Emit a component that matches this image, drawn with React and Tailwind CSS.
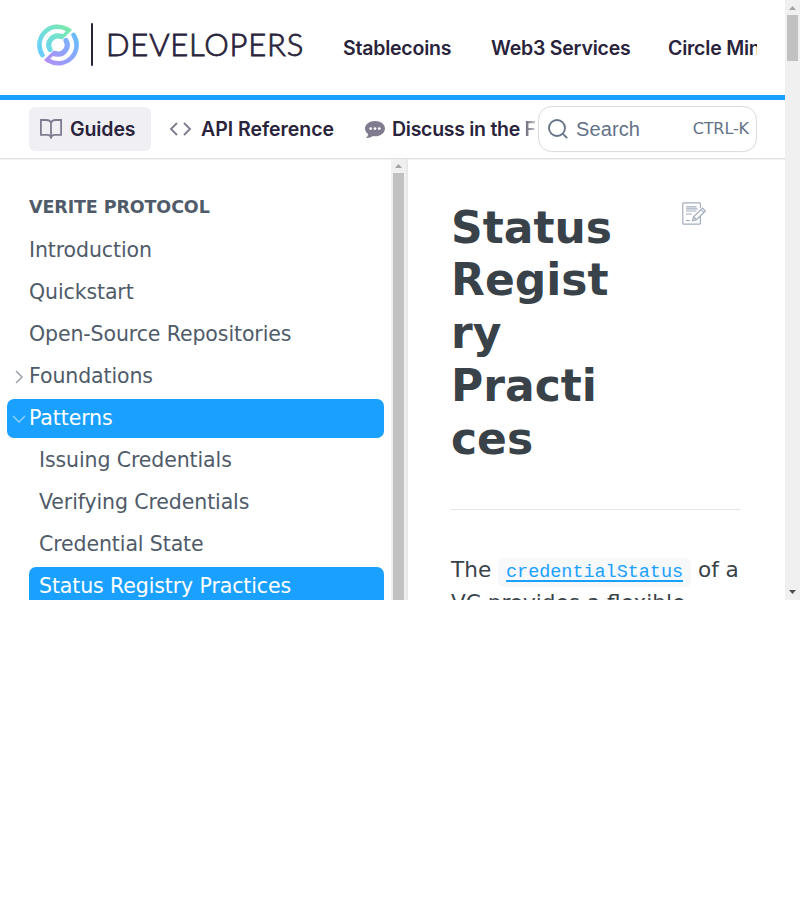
const links = [
  { label: 'Introduction' },
  { label: 'Quickstart' },
  { label: 'Open-Source Repositories' },
  { label: 'Foundations', chevron: 'right' },
  { label: 'Patterns', chevron: 'down', active: true },
];

const children = [
  { label: 'Issuing Credentials' },
  { label: 'Verifying Credentials' },
  { label: 'Credential State' },
  { label: 'Status Registry Practices', active: true },
];

function LogoHalf({ paint, transform }) {
  return (
    <g transform={transform} stroke={paint} fill="none" strokeLinecap="round">
      <path strokeWidth="4.600" d="M5.400 31A18.300 18.300 0 0 1 30.300 5.400" />
      <path strokeWidth="5.200" d="M13 25.500A9.100 9.100 0 0 1 23.500 12.300" />
      <path fill={paint} strokeWidth="1.500" strokeLinejoin="round" d="M30.500 3.800 34 6 25 14.600 22.500 14 23.500 10.500 26.500 10.700 29.500 7.500Z" />
    </g>
  );
}

function Logo() {
  return (
    <svg className="-mt-1.5 h-[42px] w-[42px] shrink-0" viewBox="0 0 42 42" fill="none">
      <defs>
        <linearGradient id="mint" x1="34" y1="5" x2="3" y2="32" gradientUnits="userSpaceOnUse">
          <stop stopColor="#79e9a9" />
          <stop offset="0.5" stopColor="#72dfd6" />
          <stop offset="1" stopColor="#68ccff" />
        </linearGradient>
        <linearGradient id="violet" x1="34" y1="4" x2="2" y2="32" gradientUnits="userSpaceOnUse">
          <stop stopColor="#b18ff5" />
          <stop offset="0.5" stopColor="#8fa2fc" />
          <stop offset="1" stopColor="#65bfff" />
        </linearGradient>
      </defs>
      <LogoHalf paint="url(#mint)" />
      <LogoHalf paint="url(#violet)" transform="rotate(180 21 21)" />
    </svg>
  );
}

function Header() {
  return (
    <header className="flex h-[100px] items-center border-b-[5px] border-[#1aa1ff] pr-7 pl-[36.500px]">
      <Logo />
      <div className="-mt-1.5 ml-[12px] h-[43px] w-[2px] shrink-0 rounded bg-[#29233b]" />
      <div className="-mt-[7px] ml-[13.500px] w-[198px] shrink-0 font-['Lato'] text-[31px] leading-none font-light tracking-[0.8px] whitespace-nowrap text-[#29233b] [-webkit-text-stroke:0.8px_#29233b]">
        DEVELOPERS
      </div>
      <nav className="ml-[39px] flex min-w-0 flex-1 overflow-hidden font-['Inter'] text-[19.500px] leading-7 font-semibold tracking-[-0.220px] whitespace-nowrap text-[#29233b]">
        <a className="w-[148px] shrink-0">Stablecoins</a>
        <a className="w-[177px] shrink-0">Web3 Services</a>
        <a className="shrink-0">Circle Mint</a>
      </nav>
    </header>
  );
}

function SubNav() {
  return (
    <div className="flex h-[59px] items-center border-b border-[#e0e0e0] pr-7 pl-[29px] shadow-[0_1px_1px_rgba(0,0,0,0.05)]">
      <nav className="flex min-w-0 flex-1 items-center overflow-hidden font-['Inter'] text-[19.500px] font-semibold whitespace-nowrap text-[#29233b]">
        <a className="flex h-11 w-[122px] shrink-0 items-center rounded-md bg-[#f0eff4] pl-[11px]">
          <svg className="mr-2 h-5 w-[22px]" viewBox="0 0 22 20" fill="none" stroke="#817b90" strokeWidth="1.800">
            <path d="M11 3.500C10 1.600 8.500 1 6.500 1H.9v14.800h6.400c2 0 3.200.8 3.700 2.700.5-1.900 1.700-2.700 3.700-2.700h6.400V1h-5.600c-2 0-3.500.6-4.500 2.500Zm0 0V19" />
          </svg>
          <span className="pt-0.5 tracking-[-0.100px]">Guides</span>
        </a>
        <a className="ml-[18px] flex w-[196px] shrink-0 items-center">
          <svg className="mr-[9px] h-4 w-[23px]" viewBox="0 0 23 16" fill="none" stroke="#817b90" strokeWidth="1.900">
            <path d="M8 2 2 8l6 6M15 2l6 6-6 6" />
          </svg>
          <span className="pt-0.5 tracking-[-0.020px]">API Reference</span>
        </a>
        <a className="flex shrink-0 items-center">
          <svg className="mt-0.5 mr-[7px] h-[18px] w-5" viewBox="0 0 20 18">
            <path fill="#817b90" d="M10 0C4.500 0 0 3.200 0 7.500c0 2.300 1.200 4.200 3.200 5.500-.2 1.500-1 2.900-2.200 4 2.500.4 5-.4 6.800-1.900.7.100 1.400.2 2.200.2 5.500 0 10-3.400 10-7.800S15.500 0 10 0Z" />
            <circle cx="5.700" cy="7.600" r="1.400" fill="#fff" />
            <circle cx="10" cy="7.600" r="1.400" fill="#fff" />
            <circle cx="14.300" cy="7.600" r="1.400" fill="#fff" />
          </svg>
          <span className="pt-0.5 tracking-[-0.280px]">
            Discuss in the{' '}
            <span className="bg-gradient-to-r from-[#6b667a] to-[#d0ced5] bg-clip-text text-transparent">F</span>
          </span>
        </a>
      </nav>
      <button className="ml-[3px] flex h-[46px] w-[219px] shrink-0 items-center rounded-[14px] border border-[#dedede] pr-[7px] pl-[9px] text-[#637288] shadow-[0_0_1px_rgba(0,0,0,0.15)]">
        <svg className="mr-2 h-5 w-5" viewBox="0 0 20 20" fill="none" stroke="#637288" strokeWidth="1.800">
          <circle cx="9" cy="9" r="8" />
          <path d="m14.600 14.600 4.600 4.600" />
        </svg>
        <span className="-mt-px font-['Liberation_Sans'] text-[20px] tracking-[0.100px]">Search</span>
        <span className="ml-auto font-['DejaVu_Sans'] text-[16px] tracking-[-0.100px]">CTRL-K</span>
      </button>
    </div>
  );
}

function Sidebar() {
  return (
    <aside className="flex w-[408px] shrink-0 border-r-2 border-[#e9e9e9]">
      <div className="w-[391px] shrink-0 pt-[30px] pr-[7px] pl-[7px] font-['DejaVu_Sans'] text-[20.500px] tracking-[-0.110px] text-[#4f5b69]">
        <h2 className="mb-[6px] flex h-[36px] items-center pl-[22px] text-[17.500px] font-bold">VERITE PROTOCOL</h2>
        {links.map((item) => (
          <a
            key={item.label}
            className={
              item.active
                ? 'mt-[3px] flex h-[39px] items-center rounded-[7px] bg-[#1aa1ff] text-white'
                : 'mt-[3px] flex h-[39px] items-center'
            }
          >
            <span className="flex w-[22px] justify-center pl-0.5">
              {item.chevron === 'right' && (
                <svg className="h-3.5 w-2" viewBox="0 0 8 14" fill="none" stroke="#9aa1aa" strokeWidth="1.500">
                  <path d="m1 1 6 6-6 6" />
                </svg>
              )}
              {item.chevron === 'down' && (
                <svg className="h-2 w-3.5" viewBox="0 0 14 8" fill="none" stroke="#8dd0ff" strokeWidth="1.500">
                  <path d="m1 1 6 6 6-6" />
                </svg>
              )}
            </span>
            {item.label}
          </a>
        ))}
        {children.map((item) => (
          <a
            key={item.label}
            className={
              item.active
                ? 'mt-[3px] ml-[22px] flex h-[39px] items-center rounded-[7px] bg-[#1aa1ff] pl-2.5 text-white'
                : 'mt-[3px] ml-[22px] flex h-[39px] items-center pl-2.5'
            }
          >
            {item.label}
          </a>
        ))}
      </div>
      <div className="flex w-[15px] shrink-0 flex-col items-center bg-[#f0f0f0] pt-[5px]">
        <svg className="h-1 w-[7px] shrink-0" viewBox="0 0 7 4" fill="#a3a3a3">
          <path d="M3.500 0 7 4H0Z" />
        </svg>
        <div className="mt-[5px] w-[11px] flex-1 bg-[#c1c1c1]" />
      </div>
    </aside>
  );
}

function Article() {
  return (
    <main className="min-w-0 flex-1 pt-[43px] pr-[45px] pl-[43px] font-['DejaVu_Sans'] text-[#384248]">
      <div className="flex h-[308px] justify-between border-b border-[#e3e5e8]">
        <h1 className="-mt-[0.400px] text-[44px] leading-[52.800px] font-bold">
          Status
          <br />
          Regist
          <br />
          ry
          <br />
          Practi
          <br />
          ces
        </h1>
        <svg className="mr-[34px] h-[23px] w-6 shrink-0" viewBox="0 0 24 23" fill="none" stroke="#a3adbf" strokeWidth="1.200">
          <path d="M18.400 6V1.800a1 1 0 0 0-1-1H1.800a1 1 0 0 0-1 1v19.400a1 1 0 0 0 1 1h15.600a1 1 0 0 0 1-1V14M4 4.800h10.500M4 6.900h11.500M4 9h10.500M4 12h6M4 18.500h4" />
          <path fill="#fff" d="m10.600 18.700 1-4.200 9-8.500 2.800 2.900-9 8.700-3.800 1.100ZM19 7.600l2.700 2.800M11.600 14.500l2.800 3.100" />
        </svg>
      </div>
      <p className="pt-[43px] text-[21.600px] leading-[33px] whitespace-nowrap">
        The{' '}
        <code className="rounded-md bg-[#f6f8fa] px-2 py-1 font-['Liberation_Mono'] text-[18.500px] tracking-[-0.040px] text-[#1aa1ff] underline decoration-2 underline-offset-[3px]">
          credentialStatus
        </code>{' '}
        of a
        <span className="-mt-[3px] block">VC provides a flexible</span>
      </p>
    </main>
  );
}

export default function App() {
  return (
    <div className="h-[900px] w-[800px] overflow-hidden bg-white">
      <div className="flex h-[600px] overflow-hidden">
        <div className="flex w-[785px] shrink-0 flex-col">
          <Header />
          <SubNav />
          <div className="flex min-h-0 flex-1 overflow-hidden">
            <Sidebar />
            <Article />
          </div>
        </div>
        <div className="flex w-[15px] shrink-0 flex-col items-center bg-[#f0f0f0] pt-1.5 pb-[6px]">
          <svg className="h-1 w-[7px]" viewBox="0 0 7 4" fill="#a3a3a3">
            <path d="M3.500 0 7 4H0Z" />
          </svg>
          <div className="mt-[5px] h-[46px] w-[11px] bg-[#c1c1c1]" />
          <svg className="mt-auto h-1 w-[7px]" viewBox="0 0 7 4" fill="#505050">
            <path d="M3.500 4 7 0H0Z" />
          </svg>
        </div>
      </div>
    </div>
  );
}
